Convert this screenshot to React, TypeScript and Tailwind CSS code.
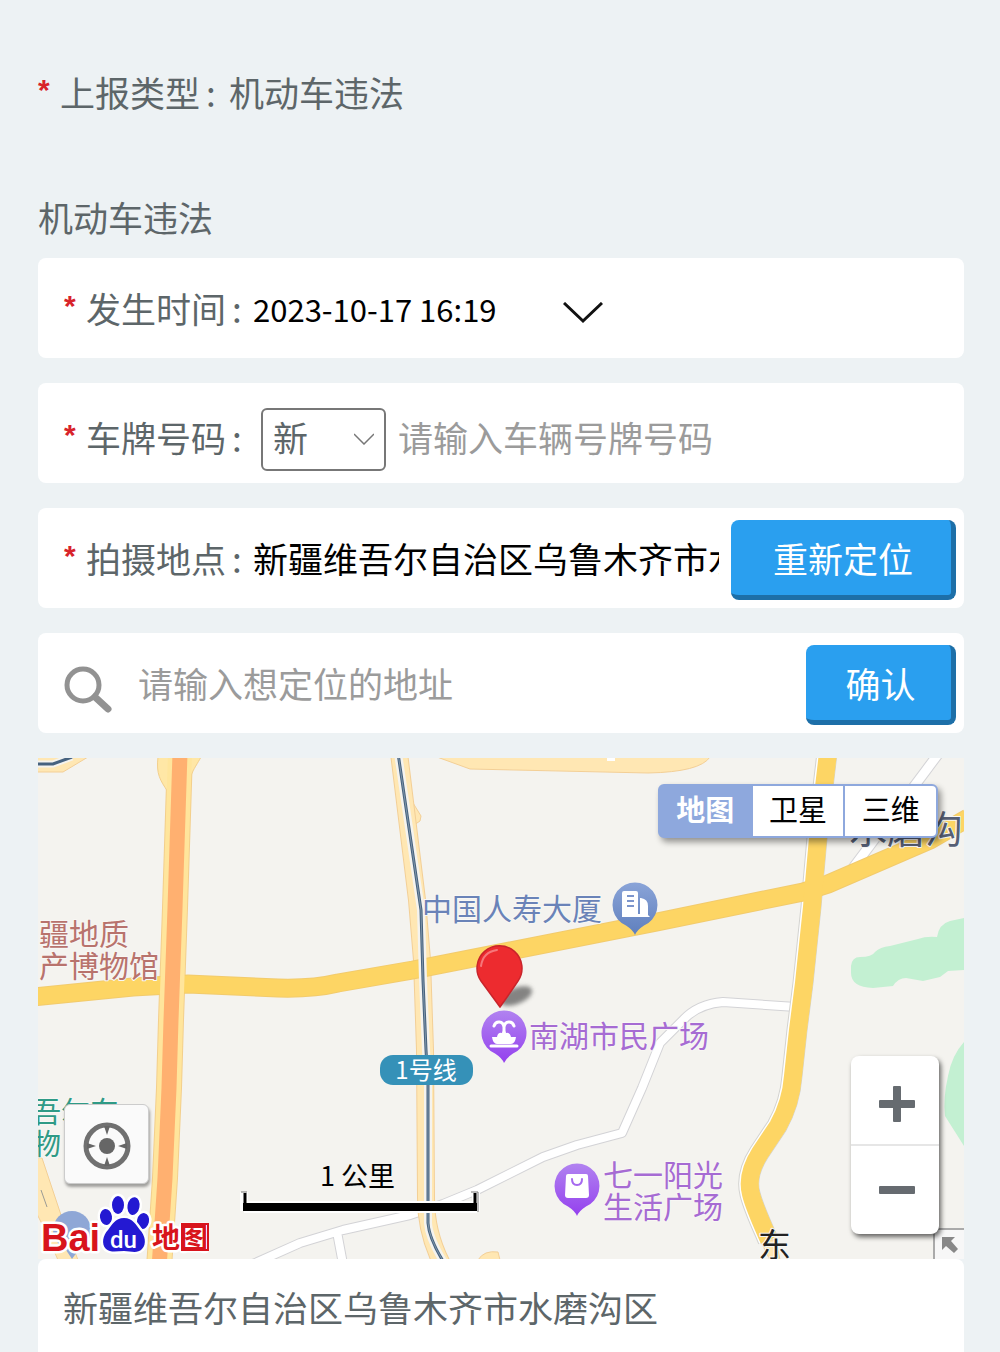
import { useState } from "react"
import type { ReactNode } from "react"

const MAP_MODES = ["地图", "卫星", "三维"]
const ADDRESS = "新疆维吾尔自治区乌鲁木齐市水磨沟区"

const MAIN_ROAD = "M142 -5 L137 150 L133 262 L131 330 L127 420 L121 510"
const EAST_ROAD =
  "M790 -5 L780 80 L776 125 L774 149 L766 225 L760 272 L755 318 Q753 345 740 368 L722 395 Q708 417 713 436 Q716 448 728 475 L731 482"
const CROSS_ROAD =
  "M-5 239 L95 229 L150 226 L240 230 Q275 231 300 225 L375 212 L619 164 L765 134 L790 126 L892 82 L930 60"
const METRO_ROAD = "M361 -5 L379 142 L384 202 L387 292 L388 440 Q388 475 404 506"
const METRO_LINE = "M360 -5 L383 152 L385 222 L388 292 L390 327 L390 465 Q391 480 405 503"
const SIDE_ROAD =
  "M758 249 L685 244 Q660 246 645 262 L622 285 L604 330 L584 375 L539 387 L505 399 L439 432 L405 446 L372 457 L305 472 L262 485 L215 506 M299 474 L305 506"

function Required() {
  return (
    <span aria-hidden="true" className="w-[22px] shrink-0 font-['Liberation_Sans'] text-[30px] leading-[46px] font-bold text-[#d8232a]">
      *
    </span>
  )
}

function FieldLabel({ htmlFor, text }: { htmlFor?: string; text: string }) {
  return (
    <label htmlFor={htmlFor} className="flex shrink-0 items-start">
      <Required />
      <span>{text}</span>
      <span className="ml-1.5 w-[21px]">:</span>
    </label>
  )
}

function Card({ children, className = "" }: { children: ReactNode; className?: string }) {
  return <div className={`flex h-[100px] items-center rounded-lg bg-white pr-2 pl-[26px] ${className}`}>{children}</div>
}

function ActionButton({ children, className }: { children: ReactNode; className: string }) {
  return (
    <button
      type="button"
      className={`mt-1 h-20 shrink-0 rounded-lg border-r-[5px] border-b-[5px] border-[#1d6fa8] bg-[#2a9fef] pt-px pl-1 text-white ${className}`}
    >
      {children}
    </button>
  )
}

function PoiPin({ x, y, fill, children }: { x: number; y: number; fill: string; children: ReactNode }) {
  return (
    <g transform={`translate(${x} ${y})`}>
      <path d="M0 30 Q-2 25 -9 20.5 A22.5 22.5 0 1 1 9 20.5 Q2 25 0 30 Z" fill={fill} />
      {children}
    </g>
  )
}

function BaiduLogo() {
  return (
    <g>
      <g stroke="#fff" strokeWidth="5" strokeLinejoin="round" paintOrder="stroke">
        <text x="3" y="493" fontSize="38" fontWeight="700" fill="#d8141c" className="font-['Liberation_Sans']">
          Bai
        </text>
        <text x="114" y="490" fontSize="28" fontWeight="700" fill="#d8141c">
          地图
        </text>
        <g fill="#2419d2">
          <ellipse cx="68" cy="459" rx="6" ry="8" transform="rotate(-8 68 459)" />
          <ellipse cx="80" cy="447" rx="6" ry="9" />
          <ellipse cx="95.500" cy="448" rx="6" ry="9" transform="rotate(10 95 448)" />
          <ellipse cx="105" cy="463" rx="6" ry="8" transform="rotate(12 105 463)" />
          <path d="M86 460 C77 460 74 467 70 472 C65 477 63 486 68 491 C73 495 79 493 86 493 C93 493 99 496 104 491 C109 486 107 477 102 472 C98 467 95 460 86 460 Z" />
        </g>
      </g>
      <path d="M144 466 H170 V492 H144 Z" stroke="#d8141c" strokeWidth="2" />
      <text x="72" y="490" fontSize="24" fontWeight="500" fill="#fff" className="font-[Roboto]">
        du
      </text>
    </g>
  )
}

function MapCanvas() {
  return (
    <svg
      viewBox="0 0 926 501"
      preserveAspectRatio="xMidYMid slice"
      className="block h-full w-full bg-[#f4f3ef]"
      fill="none"
      role="img"
      aria-label="地图"
    >
      <defs>
        <linearGradient id="purple" x1="0" y1="0" x2="0" y2="1">
          <stop offset="0" stopColor="#b183f0" />
          <stop offset="1" stopColor="#9440ee" />
        </linearGradient>
        <linearGradient id="blue" x1="0" y1="0" x2="0" y2="1">
          <stop offset="0" stopColor="#8aa4d8" />
          <stop offset="1" stopColor="#5f7fbd" />
        </linearGradient>
        <filter id="soft" x="-50%" y="-50%" width="200%" height="200%">
          <feGaussianBlur stdDeviation="2" />
        </filter>
      </defs>

      {/* parks */}
      <g fill="#c3f0d2">
        <path d="M813 208 Q814 199 822 199 Q834 199 837 194 Q842 189 852 188 L880 181 Q888 178 899 179 Q901 166 912 163 L926 160 V212 L910 213 L902 219 L885 223 L868 220 Q860 220 855 228 L835 230 Q813 229 813 215 Z" />
        <path d="M926 284 Q914 297 910 318 Q905 340 907 358 L926 388 Z" />
      </g>

      {/* minor roads */}
      <g strokeLinejoin="round">
        <path d={SIDE_ROAD} stroke="#d3d3d6" strokeWidth="10" />
        <path d={SIDE_ROAD} stroke="#fff" strokeWidth="8" />
        <path d="M901 -5 L815 110" stroke="#d3d3d6" strokeWidth="11" />
        <path d="M901 -5 L815 110" stroke="#fff" strokeWidth="9" />
      </g>

      {/* secondary roads */}
      <g fill="#ffe7b3" stroke="#f3cf96" strokeWidth="1">
        <path d="M399 -1 L432 11 L610 15 Q662 14 672 -1 Z" />
        <path d="M-1 14 H25 L50 -1 H-1 Z" />
        <path d="M-1 400 L4 400 L24 460 L40 502 H20 L6 470 L-1 456 Z" />
        <path d="M366 20 L372 40 L383 58 L382 63 L376 67 Z" />
        <path d="M440 502 Q446 492 460 494 L462 502 Z" />
        <path d="M722 482 L732 502 H742 L738 482 Z" />
      </g>
      <rect x="569" y="0" width="8" height="3" fill="#fff" />
      <path d="M-1 6 H15 L34 -1" stroke="#f4f3ef" strokeWidth="7" />
      <path d="M-1 6 H15 L34 -1" stroke="#46627f" strokeWidth="3" />
      <path d="M3 432 L9 449" stroke="#9b9b95" strokeWidth="1" />

      {/* road with metro line */}
      <path d={METRO_ROAD} stroke="#f3cf96" strokeWidth="18" />
      <path d={METRO_ROAD} stroke="#ffe7b3" strokeWidth="16" />

      {/* arterial roads */}
      <path d={EAST_ROAD} stroke="#d3d3d0" strokeWidth="21" transform="translate(-1 0)" />
      <path d={EAST_ROAD} stroke="#fff" strokeWidth="19" transform="translate(-1 0)" />
      <path d={MAIN_ROAD} stroke="#f3cf8c" strokeWidth="26" />
      <path d={CROSS_ROAD} stroke="#f2cb6d" strokeWidth="19" />
      <path d={CROSS_ROAD} stroke="#fdd564" strokeWidth="17" />
      <path d={EAST_ROAD} stroke="#fdd564" strokeWidth="18" />
      <path d="M120 -1 C118 16 122 22 130 34 L150 34 C152 14 156 12 163 -1 Z" fill="#ffe7a6" stroke="#f3cf8c" />
      <path d={MAIN_ROAD} stroke="#ffe59c" strokeWidth="24" />
      <path d={MAIN_ROAD} stroke="#ffb070" strokeWidth="15" />
      <path d={METRO_LINE} stroke="#f4f3ef" strokeWidth="8" />
      <path d={METRO_LINE} stroke="#46627f" strokeWidth="3" />
      <path d={METRO_LINE} stroke="#7f95a8" strokeWidth="1" />

      {/* place names */}
      <g fontSize="30" stroke="#f8f7f4" strokeWidth="2" strokeLinejoin="round" paintOrder="stroke">
        <g fill="#b8736d">
          <text x="1" y="187">疆地质</text>
          <text x="1" y="219">产博物馆</text>
        </g>
        <g fill="#2f9a86" fontSize="29">
          <text x="-6" y="365">吾尔东</text>
          <text x="-6" y="397">物</text>
        </g>
        <text x="384" y="162" fill="#6a83b8">中国人寿大厦</text>
        <g fill="#a66bd3">
          <text x="491" y="289">南湖市民广场</text>
          <text x="565" y="428">七一阳光</text>
          <text x="565" y="460">生活广场</text>
        </g>
        <text x="811" y="85" fontSize="38" fill="#565f75">水磨沟</text>
        <text x="720" y="499" fontSize="33" fill="#222">东</text>
      </g>

      <rect x="342" y="297" width="93" height="30" rx="13" fill="#3591b8" />
      <text x="388" y="321" fontSize="24" textAnchor="middle" fill="#fff">1号线</text>

      <PoiPin x={597} y={147} fill="url(#blue)">
        <path d="M-14 12 H-13 V-12 Q-13 -14 -11 -14 H1 Q3 -14 3 -12 V9 H5 V-7 H6 Q13 -6 13 1 V10 L15 12 Z" fill="#fff" />
        <path d="M-8 -9 H-1 M-8 -4 H-1 M-8 1 H-1" stroke="#7c95cc" strokeWidth="2" />
      </PoiPin>
      <PoiPin x={466} y={275} fill="url(#purple)">
        <path d="M-13 13 H13 M0 0 V-8 M0 -6 C-1 -12 -8 -13 -10 -7 M0 -6 C1 -12 8 -13 10 -7" stroke="#fff" strokeWidth="3" strokeLinecap="round" />
        <path d="M-12 4 H-7 Q-6 -1 -2 0 L0 -5 L2 0 Q6 -1 7 4 H12 Q11 11 7 11 H-7 Q-11 11 -12 4 Z" fill="#fff" />
      </PoiPin>
      <PoiPin x={539} y={428} fill="url(#purple)">
        <path d="M-9 -12 H9 Q11 -12 11 -10 L12 9 Q12 12 9 12 H-9 Q-12 12 -12 9 L-11 -10 Q-11 -12 -9 -12 Z" fill="#fff" />
        <path d="M-5 -7 Q-5 -1 0 -1 Q5 -1 5 -7" stroke="#a669ef" strokeWidth="2" strokeLinecap="round" />
      </PoiPin>

      {/* current position */}
      <ellipse cx="478" cy="238" rx="17" ry="8" transform="rotate(-22 478 238)" fill="#555" opacity="0.7" filter="url(#soft)" />
      <path d="M462 249 Q454 238 443 223 A22.500 22.500 0 1 1 480 223 Q470 238 462 249 Z" fill="#ed2b2f" stroke="#c9242b" strokeWidth="1.500" />
      <path d="M443 208 Q445 194 459 192" stroke="#f6777a" strokeWidth="2" strokeLinecap="round" />

      {/* scale */}
      <path d="M206 434 V453 M438 434 V453" stroke="#fff" strokeWidth="8" />
      <path d="M206 449 H439" stroke="#fff" strokeWidth="12" />
      <path d="M207 435 V453 M437 435 V453" stroke="#000" strokeWidth="3" />
      <path d="M205 449 H439" stroke="#000" strokeWidth="8" />
      <path d="M203 434 H209 M433 434 H440 V454" stroke="#777" strokeWidth="1" />
      <text x="282" y="428" fontSize="27" fill="#000">1 公里</text>

      <circle cx="34" cy="472" r="19" fill="#8fa7d6" />
      <path d="M24 486 L34 501 L45 486 Z" fill="#8fa7d6" />
      <BaiduLogo />
    </svg>
  )
}

function MapPanel() {
  const [mode, setMode] = useState("地图")

  return (
    <div className="relative mt-[25px] h-[501px] overflow-hidden">
      <MapCanvas />

      <div className="absolute top-[26px] right-[26px] flex h-[54px] w-[280px] overflow-hidden rounded-md border-2 border-[#8ea8dd] bg-[#8ea8dd] shadow-[3px_4px_6px_rgba(0,0,0,0.4)]">
        {MAP_MODES.map((m) => (
          <button
            key={m}
            type="button"
            onClick={() => setMode(m)}
            className={
              m === mode
                ? "flex-1 bg-[#8ea8dd] pb-1.5 text-[29px] leading-none font-bold text-white"
                : "ml-0.5 flex-1 bg-white pb-1.5 text-[29px] leading-none text-black"
            }
          >
            {m}
          </button>
        ))}
      </div>

      <button
        type="button"
        aria-label="定位"
        className="absolute bottom-[75px] left-[26px] flex h-20 w-[85px] items-center justify-center rounded-md border border-[#ccc] bg-[#fafafa] shadow-[1px_3px_3px_rgba(0,0,0,0.35)]"
      >
        <svg viewBox="0 0 48 48" className="mt-1 h-12 w-12" fill="#666">
          <circle cx="24" cy="24" r="21" fill="none" stroke="#707070" strokeWidth="5" />
          <circle cx="24" cy="24" r="8" />
          <path d="M21 4 H27 L24 13 Z M21 44 H27 L24 35 Z M4 21 V27 L13 24 Z M44 21 V27 L35 24 Z" />
        </svg>
      </button>

      <button
        type="button"
        aria-label="展开"
        className="absolute right-0 bottom-0 flex h-[31px] w-[31px] items-center justify-center border-t-2 border-l-2 border-[#aaa] bg-[#f7f7f7]"
      >
        <svg viewBox="0 0 16 16" className="h-4 w-4" fill="#888">
          <path d="M0 0 H13 L9 4 L16 12 L12 16 L4 9 L0 13 Z" />
        </svg>
      </button>

      <div className="absolute right-[25px] bottom-[25px] flex h-[178px] w-[88px] flex-col rounded-lg bg-white shadow-[2px_3px_5px_rgba(0,0,0,0.6)]">
        <button type="button" aria-label="放大" className="flex flex-1 items-center justify-center border-b-2 border-[#e6e6e6]">
          <svg viewBox="0 0 36 36" className="ml-1 mt-2 h-9 w-9" fill="#666b70">
            <rect x="0" y="14" width="36" height="8" rx="1" />
            <rect x="14" y="0" width="8" height="36" rx="1" />
          </svg>
        </button>
        <button type="button" aria-label="缩小" className="flex flex-1 items-center justify-center">
          <svg viewBox="0 0 36 36" className="ml-1 h-9 w-9" fill="#666b70">
            <rect x="0" y="14" width="36" height="8" rx="1" />
          </svg>
        </button>
      </div>
    </div>
  )
}

export default function App() {
  const [plate, setPlate] = useState("")
  const [place, setPlace] = useState(ADDRESS)
  const [query, setQuery] = useState("")

  return (
    <main className="min-h-screen bg-[#edf2f4] pt-[67px] pr-9 pl-[38px] font-['Noto_Sans_CJK_SC',sans-serif] text-[35px] leading-[50px] text-[#5d6669]">
      <div className="flex items-center gap-0.5">
        <FieldLabel text="上报类型" />
        <span>机动车违法</span>
      </div>

      <h1 className="mt-[75px] mb-4">机动车违法</h1>

      <form className="flex flex-col gap-[25px]" onSubmit={(e) => e.preventDefault()}>
        <Card>
          <FieldLabel htmlFor="time" text="发生时间" />
          <div className="relative">
            <select id="time" className="h-[50px] appearance-none bg-transparent pr-[106px] text-[31px] leading-[50px] text-black">
              <option>2023-10-17 16:19</option>
            </select>
            <svg viewBox="0 0 40 22" className="pointer-events-none absolute top-5 right-0 h-[22px] w-10" fill="none" stroke="#111" strokeWidth="3">
              <path d="M1 1 L20 19 L39 1" />
            </svg>
          </div>
        </Card>

        <Card className="pt-2">
          <FieldLabel htmlFor="plate" text="车牌号码" />
          <div className="relative mt-1 ml-2">
            <select
              aria-label="省份"
              className="block h-[63px] w-[125px] appearance-none rounded-md border-2 border-[#777] bg-white pb-1 pl-2.5 leading-[50px]"
            >
              <option>新</option>
            </select>
            <svg viewBox="0 0 20 12" className="pointer-events-none absolute top-[25px] right-3 h-3 w-5" fill="none" stroke="#777" strokeWidth="1.500">
              <path d="M0 1 L10 11 L20 1" />
            </svg>
          </div>
          <input
            id="plate"
            value={plate}
            onChange={(e) => setPlate(e.target.value)}
            placeholder="请输入车辆号牌号码"
            className="ml-3 h-[50px] min-w-0 flex-1 text-black outline-none placeholder:text-[#9b9b9b]"
          />
        </Card>

        <Card>
          <FieldLabel htmlFor="place" text="拍摄地点" />
          <input
            id="place"
            value={place}
            onChange={(e) => setPlace(e.target.value)}
            className="mr-3 h-[50px] min-w-0 flex-1 text-black outline-none"
          />
          <ActionButton className="w-[225px]">重新定位</ActionButton>
        </Card>

        <Card>
          <svg viewBox="0 0 48 48" className="mt-3.5 mr-[26px] h-12 w-12 shrink-0" fill="none" stroke="#929292">
            <circle cx="19" cy="19" r="16" strokeWidth="5" />
            <path d="M31 31 L44 43" strokeWidth="7" strokeLinecap="round" />
          </svg>
          <input
            aria-label="地址"
            value={query}
            onChange={(e) => setQuery(e.target.value)}
            placeholder="请输入想定位的地址"
            className="mr-3 h-[50px] min-w-0 flex-1 text-black outline-none placeholder:text-[#9b9b9b]"
          />
          <ActionButton className="w-[150px]">确认</ActionButton>
        </Card>
      </form>

      <MapPanel />

      <p className="rounded-t-lg bg-white px-[25px] pt-[23px] pb-5">{ADDRESS}</p>
    </main>
  )
}
